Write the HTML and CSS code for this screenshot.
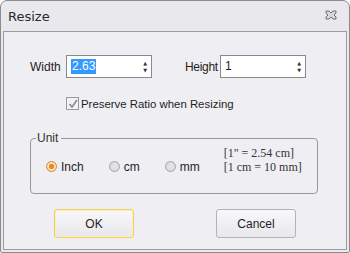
FILE: index.html
```html
<!DOCTYPE html>
<html lang="en">
<head>
  <meta charset="UTF-8" />
  <title>Resize</title>
  <link rel="stylesheet" href="styles.css">
</head>
<body>
  <div class="window">
    <div class="titlebar">
      <span class="title">Resize</span>
      <svg class="close" width="12" height="10" viewBox="0 0 12 10">
        <path d="M1 1h3l2 2 2-2h3v2l-2 2 2 2v2h-3l-2-2-2 2h-3v-2l2-2-2-2z" fill="#d8d8dc" stroke="#6e6e74" stroke-width="1"/>
      </svg>
    </div>
    <div class="panel">
      <div class="size-row">
        <label class="lbl lbl-width">Width</label>
        <div class="spin"><span class="val sel">2.63</span><span class="arrows"><i>&#9650;</i><i>&#9660;</i></span></div>
        <label class="lbl lbl-height">Height</label>
        <div class="spin"><span class="val">1</span><span class="arrows"><i>&#9650;</i><i>&#9660;</i></span></div>
      </div>
      <div class="check-row">
        <span class="checkbox"><svg width="10" height="10" viewBox="0 0 10 10"><path d="M1.5 5l2.5 3 5-7" fill="none" stroke="#8a8a8a" stroke-width="1.6"/></svg></span>
        <span>Preserve Ratio when Resizing</span>
      </div>
      <fieldset class="unit">
        <legend>Unit</legend>
        <div class="radios">
          <span class="radio on"><span class="dot"></span>Inch</span>
          <span class="radio r-cm"><span class="dot"></span>cm</span>
          <span class="radio r-mm"><span class="dot"></span>mm</span>
          <div class="note">
            <div>[1" = 2.54 cm]</div>
            <div>[1 cm = 10 mm]</div>
          </div>
        </div>
      </fieldset>
      <div class="buttons">
        <button class="btn default">OK</button>
        <button class="btn">Cancel</button>
      </div>
    </div>
  </div>
</body>
</html>
```

FILE: styles.css
```css
html, body { margin: 0; padding: 0; }
body {
  width: 350px;
  height: 253px;
  background: #fff;
  font-family: Tahoma, "DejaVu Sans", sans-serif;
  font-size: 11px;
  color: #1e1e1e;
}
.window {
  box-sizing: border-box;
  width: 350px;
  height: 253px;
  border: 1px solid #8c8c90;
  border-radius: 7px 7px 2px 2px;
  background: #e9e9ed;
  display: flex;
  flex-direction: column;
}
.titlebar {
  height: 30px;
  display: flex;
  align-items: center;
  justify-content: space-between;
  padding: 0 12px 0 7px;
}
.title { font-size: 13px; color: #2a2a2a; font-family: "DejaVu Sans", sans-serif; }
.close { margin-top: -2px; }
.panel {
  flex: 1;
  margin: 0 2px 2px 2px;
  border: 1px solid #9c9ca0;
  background: #efeff3;
  display: flex;
  flex-direction: column;
}
.size-row {
  display: flex;
  align-items: center;
  margin: 23px 0 0 26px;
}
.lbl { font-family: "Liberation Sans", sans-serif; font-size: 12px; }
.lbl-width { width: 36px; }
.lbl-height { width: 35px; margin-left: 33px; letter-spacing: -0.3px; }
.spin {
  box-sizing: border-box;
  width: 86px;
  height: 23px;
  border: 1px solid #8a8a8e;
  background: #fff;
  display: flex;
  align-items: center;
  justify-content: space-between;
  padding: 0 4px 0 4px;
}
.val { font-family: "Liberation Sans", sans-serif; font-size: 12px; line-height: 15px; }
.val.sel { background: #3399ff; color: #fff; padding: 0 1px; }
.arrows { display: flex; flex-direction: column; font-size: 5px; color: #333; line-height: 7px; }
.arrows i { font-style: normal; }
.check-row {
  display: flex;
  align-items: center;
  margin: 19px 0 0 62px;
  font-family: "Liberation Sans", sans-serif;
  font-size: 11.4px;
}
.checkbox {
  box-sizing: border-box;
  width: 13px;
  height: 13px;
  border: 1px solid #9a9a9e;
  background: #f2f2f4;
  margin-right: 2px;
  display: flex;
  align-items: center;
  justify-content: center;
}
.unit {
  margin: 21px 0 0 26px;
  width: 288px;
  height: 63px;
  box-sizing: border-box;
  border: 1px solid #98989c;
  border-radius: 4px;
  padding: 0;
}
.unit legend {
  padding: 0 3px 0 1px;
  margin-left: 5px;
  font-family: "Liberation Sans", sans-serif;
  font-size: 12px;
  color: #333;
}
.radios {
  display: flex;
  align-items: center;
  padding: 14px 0 0 15px;
  font-family: "Liberation Sans", sans-serif;
  font-size: 12px;
}
.radio { display: flex; align-items: center; }
.dot {
  box-sizing: border-box;
  width: 11px;
  height: 11px;
  border-radius: 50%;
  border: 1px solid #a8a8ac;
  background: radial-gradient(circle, #e4e4e6 30%, #cfcfd2 100%);
  margin-right: 4px;
}
.radio.on .dot {
  border-color: #c98a3a;
  background: radial-gradient(circle, #f08a1e 0 2.5px, #fde3c2 3px, #f5d2a8 100%);
}
.r-cm { margin-left: 25px; }
.r-mm { margin-left: 25px; }
.note {
  margin-left: 24px;
  margin-top: -13px;
  font-family: "Liberation Serif", serif;
  font-size: 12px;
  line-height: 14px;
  color: #333;
}
.buttons {
  display: flex;
  margin: 15px 0 0 50px;
}
.btn {
  box-sizing: border-box;
  width: 80px;
  height: 29px;
  border: 1px solid #b4b4b8;
  border-radius: 3px;
  background: linear-gradient(#f8f8fa, #e8e8ec);
  font-family: "Liberation Sans", sans-serif;
  font-size: 12px;
  color: #222;
  padding: 0;
}
.btn + .btn { margin-left: 82px; }
.btn.default { border: 1px solid #f0d060; box-shadow: inset 0 0 0 1px #fbeeb8; }
```
